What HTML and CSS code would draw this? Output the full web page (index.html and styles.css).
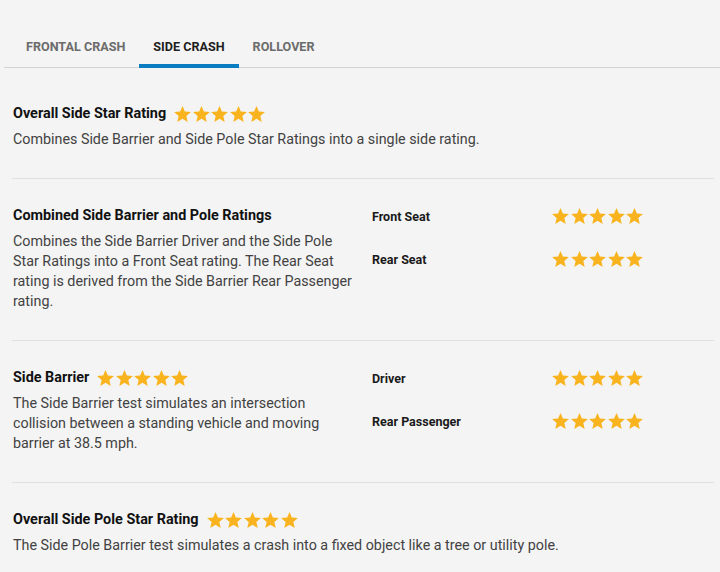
FILE: index.html
```html
<!DOCTYPE html>
<html lang="en">
<head>
<meta charset="utf-8">
<title>Side Crash Ratings</title>
<link rel="stylesheet" href="styles.css">
</head>
<body>
<svg class="defs" width="0" height="0" aria-hidden="true">
  <defs>
    <symbol id="star" viewBox="2 2 20 19">
      <path d="M12 17.27L18.18 21l-1.64-7.03L22 9.24l-7.19-.61L12 2 9.19 8.63 2 9.24l5.46 4.73L5.82 21z"/>
    </symbol>
  </defs>
</svg>

<div class="tabs">
  <div class="tab">FRONTAL CRASH</div>
  <div class="tab active">SIDE CRASH</div>
  <div class="tab">ROLLOVER</div>
</div>

<div class="panel">
  <section class="section">
    <div class="title-row">
      <h3 class="title">Overall Side Star Rating</h3>
      <span class="stars"><svg><use href="#star"/></svg><svg><use href="#star"/></svg><svg><use href="#star"/></svg><svg><use href="#star"/></svg><svg><use href="#star"/></svg></span>
    </div>
    <p class="desc">Combines Side Barrier and Side Pole Star Ratings into a single side rating.</p>
  </section>

  <section class="section split">
    <div class="left">
      <div class="title-row">
        <h3 class="title">Combined Side Barrier and Pole Ratings</h3>
      </div>
      <p class="desc">Combines the Side Barrier Driver and the Side Pole Star Ratings into a Front Seat rating. The Rear Seat rating is derived from the Side Barrier Rear Passenger rating.</p>
    </div>
    <div class="right">
      <div class="rate-row">
        <span class="label">Front Seat</span>
        <span class="stars"><svg><use href="#star"/></svg><svg><use href="#star"/></svg><svg><use href="#star"/></svg><svg><use href="#star"/></svg><svg><use href="#star"/></svg></span>
      </div>
      <div class="rate-row">
        <span class="label">Rear Seat</span>
        <span class="stars"><svg><use href="#star"/></svg><svg><use href="#star"/></svg><svg><use href="#star"/></svg><svg><use href="#star"/></svg><svg><use href="#star"/></svg></span>
      </div>
    </div>
  </section>

  <section class="section split">
    <div class="left">
      <div class="title-row">
        <h3 class="title">Side Barrier</h3>
        <span class="stars"><svg><use href="#star"/></svg><svg><use href="#star"/></svg><svg><use href="#star"/></svg><svg><use href="#star"/></svg><svg><use href="#star"/></svg></span>
      </div>
      <p class="desc">The Side Barrier test simulates an intersection collision between a standing vehicle and moving barrier at 38.5 mph.</p>
    </div>
    <div class="right">
      <div class="rate-row">
        <span class="label">Driver</span>
        <span class="stars"><svg><use href="#star"/></svg><svg><use href="#star"/></svg><svg><use href="#star"/></svg><svg><use href="#star"/></svg><svg><use href="#star"/></svg></span>
      </div>
      <div class="rate-row">
        <span class="label">Rear Passenger</span>
        <span class="stars"><svg><use href="#star"/></svg><svg><use href="#star"/></svg><svg><use href="#star"/></svg><svg><use href="#star"/></svg><svg><use href="#star"/></svg></span>
      </div>
    </div>
  </section>

  <section class="section last">
    <div class="title-row">
      <h3 class="title">Overall Side Pole Star Rating</h3>
      <span class="stars"><svg><use href="#star"/></svg><svg><use href="#star"/></svg><svg><use href="#star"/></svg><svg><use href="#star"/></svg><svg><use href="#star"/></svg></span>
    </div>
    <p class="desc">The Side Pole Barrier test simulates a crash into a fixed object like a tree or utility pole.</p>
  </section>
</div>
</body>
</html>
```

FILE: styles.css
```css
html, body {
  margin: 0;
  padding: 0;
  background: #f4f4f4;
  font-family: Roboto, "Noto Sans", Arial, sans-serif;
  color: #444;
}

.defs {
  position: absolute;
  width: 0;
  height: 0;
  overflow: hidden;
}

.tabs {
  display: flex;
  margin-left: 4px;
  padding-left: 8px;
  height: 67px;
  border-bottom: 1px solid #d2d2d2;
}

.tab {
  position: relative;
  padding: 38px 14px 0;
  font-size: 12.6px;
  line-height: 18px;
  font-weight: 700;
  color: #6b6b6b;
  height: 29px;
}

.tab.active {
  color: #1e1e1e;
}

.tab.active::after {
  content: "";
  position: absolute;
  left: 0;
  right: 0;
  bottom: -1px;
  height: 4px;
  background: #0a7cc1;
}

.panel {
  margin: 9px 6px 0 12px;
}

.section {
  padding: 25px 0 29px 1px;
  border-bottom: 1px solid #e0e0e0;
}

.section.last {
  border-bottom: none;
}

.split {
  display: grid;
  grid-template-columns: 344px 1fr;
  column-gap: 15px;
}

.title-row {
  display: flex;
  align-items: center;
  gap: 8px;
  height: 24px;
  margin-bottom: 3px;
}

.title {
  margin: 0;
  font-size: 14.4px;
  line-height: 24px;
  font-weight: 700;
  color: #111;
}

.desc {
  margin: 0;
  font-size: 14.3px;
  line-height: 20px;
  color: #424242;
}

.stars {
  display: inline-flex;
  gap: 1.5px;
  color: #f8b31e;
}

.stars svg {
  width: 17px;
  height: 16px;
  fill: currentColor;
  display: block;
}

.right {
  display: flex;
  flex-direction: column;
  gap: 19px;
}

.rate-row {
  display: grid;
  grid-template-columns: 180px auto;
  align-items: center;
  height: 24px;
}

.label {
  font-size: 12.5px;
  font-weight: 700;
  color: #1a1a1a;
}
```
